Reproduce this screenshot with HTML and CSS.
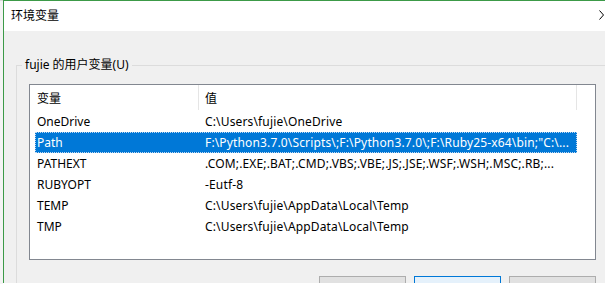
FILE: index.html
```html
<!DOCTYPE html>
<html lang="zh-CN">
<head>
    <meta charset="UTF-8">
    <title>环境变量</title>
    <link rel="stylesheet" href="styles.css">
</head>
<body>

    <div class="edge"></div>

    <div class="window">
        <div class="titlebar">
            <span class="title">环境变量</span>
            <svg class="chevron" width="5" height="10" viewBox="0 0 5 10">
                <polyline points="0.5,0.5 4.5,5 0.5,9.5" fill="none" stroke="#000" stroke-width="1"/>
            </svg>
        </div>

        <div class="client">
            <fieldset class="group">
                <legend>fujie 的用户变量(U)</legend>

                <div class="listbox">
                    <div class="list-header">
                        <div class="col-name">变量</div>
                        <div class="col-value">值</div>
                    </div>

                    <div class="row"><span class="name">OneDrive</span><span class="value">C:\Users\fujie\OneDrive</span></div>
                    <div class="row selected"><span class="name">Path</span><span class="value">F:\Python3.7.0\Scripts\;F:\Python3.7.0\;F:\Ruby25-x64\bin;"C:\...</span></div>
                    <div class="row"><span class="name">PATHEXT</span><span class="value">.COM;.EXE;.BAT;.CMD;.VBS;.VBE;.JS;.JSE;.WSF;.WSH;.MSC;.RB;...</span></div>
                    <div class="row"><span class="name">RUBYOPT</span><span class="value">-Eutf-8</span></div>
                    <div class="row"><span class="name">TEMP</span><span class="value">C:\Users\fujie\AppData\Local\Temp</span></div>
                    <div class="row"><span class="name">TMP</span><span class="value">C:\Users\fujie\AppData\Local\Temp</span></div>
                </div>

                <!-- labels fall below the visible part of the window -->
                <div class="buttons">
                    <button class="btn" aria-label="新建(N)..."></button>
                    <button class="btn default" aria-label="编辑(E)..."></button>
                    <button class="btn" aria-label="删除(D)"></button>
                </div>
            </fieldset>
        </div>
    </div>

</body>
</html>
```

FILE: styles.css
```css
body {
    margin: 0;
    background-color: #fff;
    font-family: "Noto Sans", "Noto Sans CJK SC", sans-serif;
    font-size: 12px;
    color: #000;
    display: flex;
    height: 294px;
    overflow: hidden;
}

.edge {
    width: 3px;
    height: 283px;
    background-color: #f4f4f4;
    border-top: 1px solid #d8d8d8;
    flex-shrink: 0;
}

.window {
    flex: 1;
    height: 282px;
    border-left: 1px solid #3c9a48;
    border-top: 1px solid #3c9a48;
    display: flex;
    flex-direction: column;
    overflow: hidden;
}

.titlebar {
    height: 30px;
    background-color: #fff;
    display: flex;
    align-items: center;
    justify-content: space-between;
    padding: 0 1px 0 7px;
    flex-shrink: 0;
}

.title {
    font-size: 12px;
    line-height: 16px;
}

.chevron {
    margin-top: -2px;
}

.client {
    flex: 1;
    background-color: #f0f0f0;
    padding: 26px 0 0 12px;
}

.group {
    margin: 0;
    padding: 11px 0 0 12px;
    border: 1px solid #dcdcdc;
    border-right: none;
    min-width: 0;
    height: 400px;
}

.group legend {
    margin-left: -7px;
    padding: 0 3px;
    line-height: 16px;
}

.listbox {
    width: 565px;
    height: 174px;
    border: 1px solid #828790;
    background-color: #fff;
}

.list-header {
    display: flex;
    height: 25px;
    align-items: stretch;
    margin-bottom: 1px;
}

.col-name {
    width: 161px;
    padding-left: 7px;
    border-right: 1px solid #e5e5e5;
    display: flex;
    align-items: center;
}

.col-value {
    width: 371px;
    padding-left: 6px;
    border-right: 1px solid #e5e5e5;
    display: flex;
    align-items: center;
}

.row {
    display: flex;
    height: 21px;
    align-items: center;
    margin-left: 5px;
    width: 542px;
    box-sizing: border-box;
    padding-left: 2px;
    white-space: nowrap;
}

.row .name {
    width: 168px;
}

.row .value {
    letter-spacing: 0.15px;
}

.row.selected {
    background-color: #0078d7;
    color: #fff;
    outline: 1px dotted #c0d8f0;
    outline-offset: -1px;
}

.buttons {
    width: 567px;
    display: flex;
    justify-content: flex-end;
    gap: 8px;
    margin-top: 16px;
}

.btn {
    width: 87px;
    height: 23px;
    border: 1px solid #adadad;
    background-color: #e1e1e1;
    padding: 0;
}

.btn.default {
    border-color: #0078d7;
    background-color: #e5f1fb;
}
```
